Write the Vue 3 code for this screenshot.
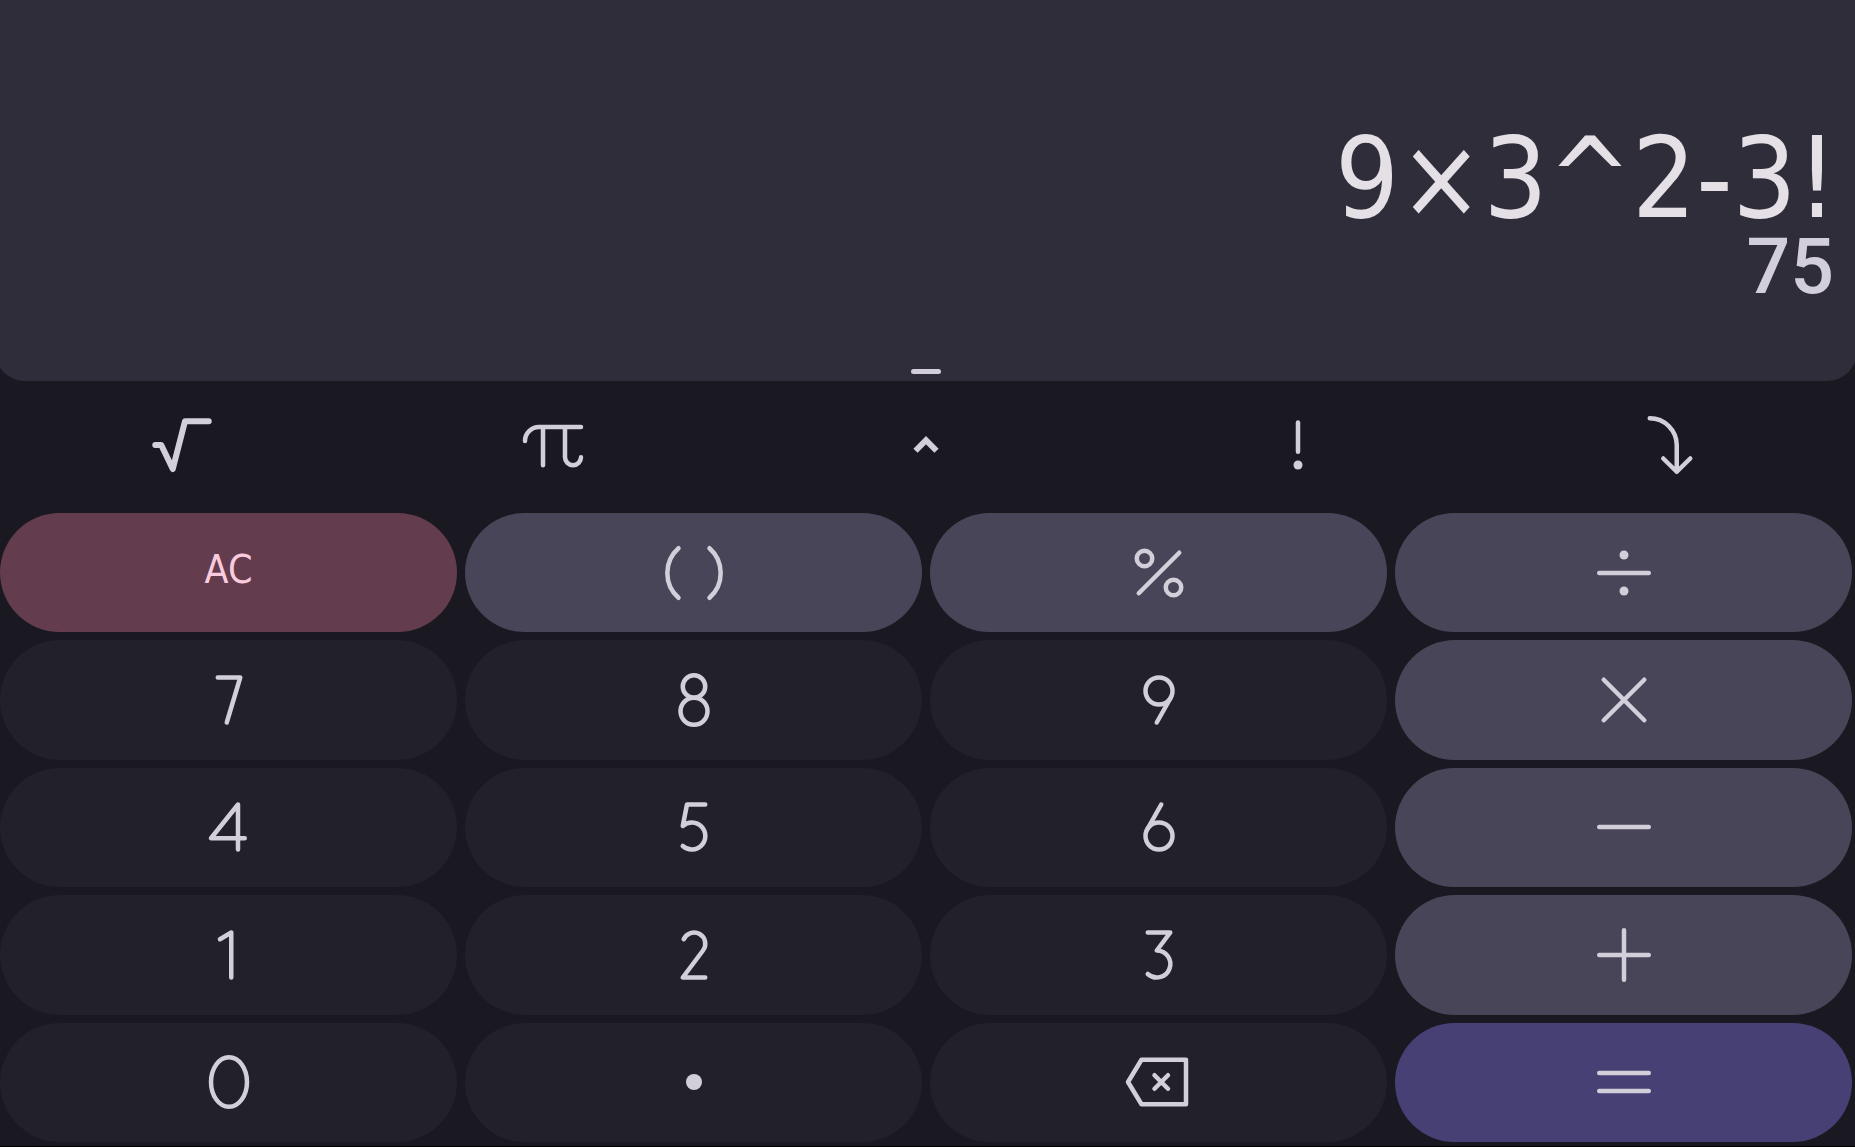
<script setup>
import { ref } from 'vue'

const expression = ref('9×3^2-3!')
const result = ref('75')

const functions = [
  { label: 'Square root', d: 'M-26.75 0H-20.75L-9.25 24L3 -23.75H26.75', bold: true },
  { label: 'Pi', d: 'M-29 -4A14 14 0 0 1 -15 -18H27M-11 -18V20.25M11 -18V12.25A8 8 0 0 0 27 12.25' },
  { label: 'Power', d: 'M-10.5 5.75L0 -4.75L10.5 5.75', sharp: true },
  { label: 'Factorial', d: 'M0 -22.5V6.75', dots: [[0, 20, 4.5]] },
  { label: 'Inverse', d: 'M-20.25 -26.75A27 27 0 0 1 6.75 0V26.75M-6.75 13.5L6.75 26.75L20.25 13.5' }
]

const keys = [
  { label: 'All clear', text: 'AC', kind: 'clear' },
  { label: 'Parentheses', kind: 'operator', d: 'M-15.5 -24.75A33 33 0 0 0 -15.5 24.75M15.5 -24.75A33 33 0 0 1 15.5 24.75' },
  { label: 'Percent', kind: 'operator', d: 'M-20.25 20.25L20.25 -20.25', rings: [[-14.5, -14.5, 7.75, 7.75], [14.5, 14.5, 7.75, 7.75]] },
  { label: 'Divide', kind: 'operator', d: 'M-24.75 0H24.75', dots: [[0, -18, 4.5], [0, 18, 4.5]] },
  { label: '7', d: 'M-11.25 -22.5H11.25L-2.25 22.5' },
  { label: '8', rings: [[0, -13.5, 11.25, 11.25], [0, 11.25, 13.5, 13.5]] },
  { label: '9', d: 'M11.7 -2.25L-2.25 22.5', rings: [[0, -9, 13.5, 13.5]] },
  { label: 'Multiply', kind: 'operator', d: 'M-20.25 -20.25L20.25 20.25M20.25 -20.25L-20.25 20.25' },
  { label: '4', d: 'M9 22.5V-22.5L-18 11.25H15.75' },
  { label: '5', d: 'M11.25 -22.5H-7L-11.25 -1A13.5 13.5 0 1 1 -11.25 19' },
  { label: '6', d: 'M-11.7 2.25L2.25 -22.5', rings: [[0, 9, 13.5, 13.5]] },
  { label: 'Subtract', kind: 'operator', d: 'M-24.75 0H24.75' },
  { label: '1', d: 'M-9 -15.75L2.25 -22.5V22.5' },
  { label: '2', d: 'M-10.3 -15.75A11.25 11.25 0 1 1 9 -4.5L-11.25 22.5H11.25' },
  { label: '3', d: 'M-11.25 -22.5H11.25L-2.25 -4.5A13.5 13.5 0 1 1 -11.25 19' },
  { label: 'Add', kind: 'operator', d: 'M-24.75 0H24.75M0 -24.75V24.75' },
  { label: '0', rings: [[0, 0, 18, 24.75]] },
  { label: 'Decimal point', dots: [[0, 0, 8]] },
  { label: 'Backspace', d: 'M-31 0L-17.5 -22.25H27V22.25H-17.5ZM-4.5 -6.75L9 6.75M9 -6.75L-4.5 6.75' },
  { label: 'Equals', kind: 'equals', d: 'M-24.75 -9H24.75M-24.75 9H24.75' }
]
</script>

<template>
  <main class="calculator">
    <section class="display">
      <input v-model="expression" class="expression" type="text" aria-label="Expression" />
      <output class="result">{{ result }}</output>
      <button class="handle" type="button" aria-label="Show history"></button>
    </section>

    <div class="functions">
      <button v-for="fn in functions" :key="fn.label" class="function" type="button" :aria-label="fn.label">
        <svg class="icon" :class="{ bold: fn.bold, sharp: fn.sharp }" viewBox="-36 -36 72 72" aria-hidden="true">
          <path :d="fn.d" />
          <circle v-for="(dot, i) in fn.dots" :key="i" class="dot" :cx="dot[0]" :cy="dot[1]" :r="dot[2]" />
        </svg>
      </button>
    </div>

    <div class="keypad">
      <button v-for="key in keys" :key="key.label" class="key" :class="key.kind" type="button" :aria-label="key.label">
        <span v-if="key.text">{{ key.text }}</span>
        <svg v-else class="icon" viewBox="-36 -36 72 72" aria-hidden="true">
          <path v-if="key.d" :d="key.d" />
          <ellipse v-for="(ring, i) in key.rings" :key="i" :cx="ring[0]" :cy="ring[1]" :rx="ring[2]" :ry="ring[3]" />
          <circle v-for="(dot, i) in key.dots" :key="i" class="dot" :cx="dot[0]" :cy="dot[1]" :r="dot[2]" />
        </svg>
      </button>
    </div>
  </main>
</template>

<style>
body {
  margin: 0;
  background: #000;
}
</style>

<style scoped>
.calculator {
  box-sizing: border-box;
  display: grid;
  grid-template-rows: 381fr 132fr 633fr;
  min-height: 100vh;
  overflow: hidden;
  border-bottom: 1px solid #000;
  background: #1a1821;
  color: #d3cfda;
  font-family: "DejaVu Sans Condensed", "DejaVu Sans", sans-serif;
}

button {
  padding: 0;
  border: 0;
  background: none;
  color: inherit;
  font: inherit;
  cursor: pointer;
}

.display {
  display: flex;
  flex-direction: column;
  box-sizing: border-box;
  margin: 0 -2px 0 -5px;
  padding: 120px 20px 7px;
  border-radius: 0 0 30px 30px;
  background: #302d3b;
}

.expression {
  box-sizing: border-box;
  width: 100%;
  height: 116px;
  padding: 0;
  border: 0;
  outline: 0;
  background: none;
  color: #e4e0e5;
  font-family: "DejaVu Sans Condensed", "DejaVu Sans", sans-serif;
  font-size: 112px;
  line-height: 116px;
  text-align: right;
}

.result {
  padding-right: 3px;
  font-family: Roboto, sans-serif;
  font-size: 77px;
  font-weight: 500;
  line-height: 62px;
  text-align: right;
}

.handle {
  align-self: center;
  width: 30px;
  height: 5px;
  margin-top: auto;
  border-radius: 3px;
  background: #d3cfda;
}

.functions {
  display: grid;
  grid-template-columns: repeat(5, 1fr);
  margin: 0 -1px 0 -4px;
  padding-bottom: 4px;
}

.function,
.key {
  display: flex;
  align-items: center;
  justify-content: center;
}

.icon {
  width: 72px;
  height: 72px;
  fill: none;
  stroke: currentColor;
  stroke-width: 4.5;
  stroke-linecap: round;
  stroke-linejoin: round;
}

.bold {
  stroke-width: 6;
}

.sharp {
  stroke-width: 6;
  stroke-linecap: butt;
  stroke-linejoin: miter;
}

.dot {
  fill: currentColor;
  stroke: none;
}

.keypad {
  display: grid;
  grid-template-columns: repeat(4, 1fr);
  grid-auto-rows: 1fr;
  gap: 8px;
  padding: 0 3px 4px 0;
}

.key {
  border-radius: 60px;
  background: #22202a;
}

.operator {
  background: #494558;
}

.clear {
  padding-bottom: 6px;
  background: #633c4d;
  color: #f8cbdd;
  font-size: 39px;
}

.equals {
  background: #464075;
}
</style>
